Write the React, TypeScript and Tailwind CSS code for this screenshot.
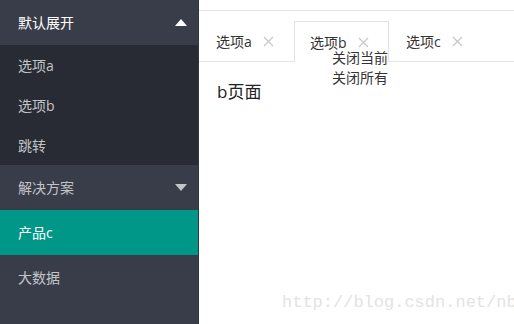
import React from "react";

const font = { fontFamily: '"Open Sans", "Noto Sans CJK SC", sans-serif' };

function Triangle({ up, color }: { up?: boolean; color: string }) {
  return (
    <svg width="12" height="7" viewBox="0 0 12 7">
      <polygon points={up ? "0,7 12,7 6,0" : "0,0 12,0 6,7"} fill={color} />
    </svg>
  );
}

function CloseX() {
  return (
    <svg width="11" height="11" viewBox="0 0 11 11" className="ml-[11px]">
      <path d="M1 1 L10 10 M10 1 L1 10" stroke="#c8c8c8" strokeWidth="1.3" fill="none" />
    </svg>
  );
}

export default function App() {
  const tabs = ["选项a", "选项b", "选项c"];

  return (
    <div className="flex h-[324px] w-[514px] overflow-hidden bg-white text-[14px]" style={font}>
      {/* sidebar */}
      <div className="flex w-[199px] shrink-0 flex-col border-r border-[#33363f] bg-[#393d49]">
        <div className="flex h-[45px] items-center justify-between pl-[18px] pr-[11px] text-white">
          <span>默认展开</span>
          <Triangle up color="#ffffff" />
        </div>
        <div className="flex flex-col bg-[#282b33] text-[#c3c4c8]">
          <div className="flex h-[40px] items-center pl-[18px]">选项a</div>
          <div className="flex h-[40px] items-center pl-[18px]">选项b</div>
          <div className="flex h-[40px] items-center pl-[18px]">跳转</div>
        </div>
        <div className="flex h-[45px] items-center justify-between pl-[18px] pr-[11px] text-[#c3c4c8]">
          <span>解决方案</span>
          <Triangle color="#c3c4c8" />
        </div>
        <div className="flex h-[45px] items-center bg-[#009688] pl-[18px] text-white">产品c</div>
        <div className="flex h-[45px] items-center pl-[18px] text-[#c3c4c8]">大数据</div>
      </div>

      {/* main */}
      <div className="relative flex-1 pt-[10px]">
        <div className="border-t border-[#e6e6e6] pt-[10px]">
          <div className="flex h-[41px] border-b border-[#e6e6e6] text-[#333]">
            {tabs.map((t, i) => (
              <div
                key={t}
                className={
                  i === 1
                    ? "relative -mb-px flex h-[41px] w-[95px] items-center border border-b-0 border-[#e2e2e2] bg-white pl-[15px]"
                    : "flex h-[40px] w-[95px] items-center pl-[17px]"
                }
              >
                <span>{t}</span>
                <CloseX />
                {i === 1 && (
                  <div className="absolute left-[37px] top-[26px] z-10 flex flex-col text-[14px] leading-[20px] text-[#333]">
                    <span>关闭当前</span>
                    <span>关闭所有</span>
                  </div>
                )}
              </div>
            ))}
          </div>
        </div>
        <div className="px-[18px] pt-[17px] text-[17px] text-[#222]">b页面</div>

        <div
          className="pointer-events-none absolute left-[83px] top-[290px] whitespace-nowrap text-[17px] text-[#e3e3e3]"
          style={{ fontFamily: '"Liberation Mono", monospace' }}
        >
          http://blog.csdn.net/nb
        </div>
      </div>
    </div>
  );
}
